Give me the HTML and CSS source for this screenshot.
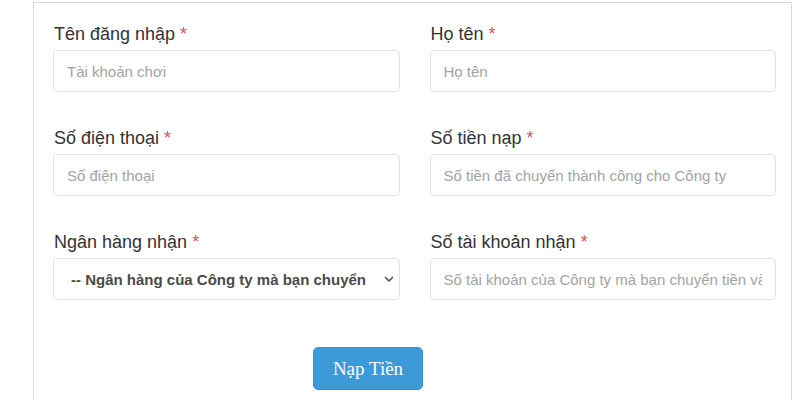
FILE: index.html
```html
<!DOCTYPE html>
<html lang="vi">
<head>
<meta charset="utf-8">
<title>Nạp Tiền</title>
<link rel="stylesheet" href="styles.css">
</head>
<body>
<form class="panel">
  <div class="grid">
    <div class="field">
      <label class="label">Tên đăng nhập <span class="req">*</span></label>
      <input class="control" type="text" placeholder="Tài khoản chơi">
    </div>
    <div class="field">
      <label class="label">Họ tên <span class="req">*</span></label>
      <input class="control" type="text" placeholder="Họ tên">
    </div>
    <div class="field">
      <label class="label">Số điện thoại <span class="req">*</span></label>
      <input class="control" type="text" placeholder="Số điện thoại">
    </div>
    <div class="field">
      <label class="label">Số tiền nạp <span class="req">*</span></label>
      <input class="control" type="text" placeholder="Số tiền đã chuyển thành công cho Công ty">
    </div>
    <div class="field">
      <label class="label">Ngân hàng nhận <span class="req">*</span></label>
      <div class="select-wrap">
        <select class="control select">
          <option>-- Ngân hàng của Công ty mà bạn chuyển tiền vào --</option>
        </select>
        <svg class="chev" width="10" height="7" viewBox="0 0 10 7"><path d="M1.5 1.5 L5 5 L8.5 1.5" fill="none" stroke="#555" stroke-width="1.7" stroke-linecap="round" stroke-linejoin="round"/></svg>
      </div>
    </div>
    <div class="field">
      <label class="label">Số tài khoản nhận <span class="req">*</span></label>
      <input class="control" type="text" placeholder="Số tài khoản của Công ty mà bạn chuyển tiền vào tài khoản">
    </div>
  </div>
  <div class="actions">
    <button class="btn" type="button">Nạp Tiền</button>
  </div>
</form>
</body>
</html>
```

FILE: styles.css
```css
html, body {
  margin: 0;
  padding: 0;
  background: #fff;
  overflow: hidden;
}
body {
  font-family: "Liberation Sans", Arial, sans-serif;
  color: #333;
}
.panel {
  margin: 2px 8px 0 33px;
  border: 1px solid #d9d9d9;
  padding: 20px 15px 30px 19px;
}
.grid {
  display: grid;
  grid-template-columns: 1fr 1fr;
  column-gap: 30px;
  row-gap: 35px;
}
.field {
  display: flex;
  flex-direction: column;
}
.label {
  font-size: 18px;
  line-height: 22px;
  margin: 0 0 5px 1px;
  color: #333;
}
.req {
  color: #d9534f;
}
.control {
  box-sizing: border-box;
  height: 42px;
  width: 100%;
  border: 1px solid #e3e3e3;
  border-radius: 4px;
  padding: 0 13px;
  font-family: "Liberation Sans", Arial, sans-serif;
  font-size: 15px;
  color: #444;
  background: #fff;
  outline: none;
}
.control::placeholder {
  color: #a3a3a3;
}
.select-wrap {
  position: relative;
}
.select {
  appearance: none;
  -webkit-appearance: none;
  font-weight: bold;
  color: #4a4a4a;
  padding: 0 31px 0 17px;
}
.chev {
  position: absolute;
  right: 6px;
  top: 18px;
  pointer-events: none;
}
.actions {
  display: flex;
  margin-top: 47px;
  padding-left: 260px;
}
.btn {
  width: 110px;
  height: 43px;
  border: 1px solid #3590d0;
  border-radius: 5px;
  background: #3d9ad9;
  color: #fff;
  font-family: "Liberation Serif", "Times New Roman", serif;
  font-size: 19px;
  padding: 0;
}
```
